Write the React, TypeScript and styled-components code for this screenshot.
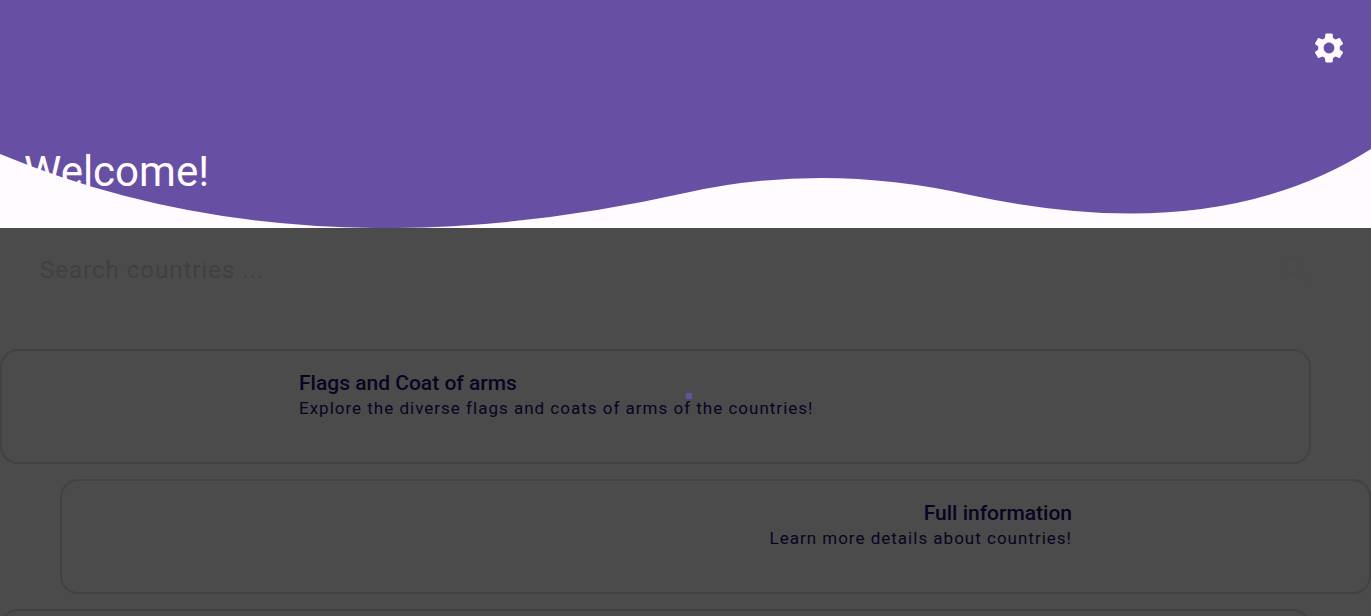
import React from "react";
import styled, { createGlobalStyle } from "styled-components";
import { MdSettings, MdSearch } from "react-icons/md";

const GlobalStyle = createGlobalStyle`
  * { box-sizing: border-box; }
  body {
    margin: 0;
    background: #4b4b4b;
    font-family: Roboto, sans-serif;
  }
`;

const Page = styled.div`
  display: flex;
  flex-direction: column;
  height: 100vh;
  position: relative;
  overflow: hidden;
`;

const Header = styled.header`
  position: relative;
  flex: none;
  height: 228px;
  padding: 24px;
  background: #fffbff;
  display: flex;
  flex-direction: column;
  justify-content: space-between;
`;

const Wave = styled.svg`
  position: absolute;
  inset: 0;
  width: 100%;
  height: 100%;
`;

const SettingsButton = styled.button`
  position: relative;
  align-self: flex-end;
  display: flex;
  justify-content: center;
  width: 36px;
  height: 48px;
  padding: 6px 0;
  border: 0;
  background: none;
  color: #fffbff;
`;

const Title = styled.h1`
  position: relative;
  margin: 0 0 6px;
  font-size: 42px;
  line-height: 52px;
  font-weight: 400;
  color: #fffbff;
`;

const SearchBar = styled.label`
  flex: none;
  display: flex;
  align-items: center;
  height: 84px;
  padding: 0 56px 0 40px;
  color: #4a4a4a;
`;

const SearchInput = styled.input`
  flex: 1;
  min-width: 0;
  padding: 0;
  border: 0;
  outline: 0;
  background: none;
  font: 400 24px/36px Roboto, sans-serif;
  letter-spacing: 1px;
  color: #3d4142;
  &::placeholder { color: #3d4142; opacity: 1; }
`;

const CardList = styled.main`
  flex: 1;
  min-height: 0;
  display: flex;
  flex-direction: column;
  gap: 15px;
  margin-top: 37px;
  overflow: hidden;
`;

const Card = styled.section<{ $end?: boolean }>`
  flex: none;
  width: calc(100% - 60px);
  height: 115px;
  align-self: ${(p) => (p.$end ? "flex-end" : "flex-start")};
  padding: 19px 297px;
  border: 2px solid #424242;
  border-radius: 18px;
  text-align: ${(p) => (p.$end ? "right" : "left")};
  color: #0a0321;
`;

const CardTitle = styled.h2`
  margin: 0;
  font-size: 21px;
  line-height: 26px;
  font-weight: 500;
`;

const CardText = styled.p`
  margin: 0;
  font-size: 17px;
  line-height: 24px;
  letter-spacing: 1px;
`;

const Spinner = styled.div`
  position: absolute;
  top: 393px;
  left: 50%;
  width: 6px;
  height: 6px;
  background: #6750a4;
  transform: rotate(4deg);
`;

export default function App() {
  return (
    <Page>
      <GlobalStyle />
      <Header>
        <Wave viewBox="0 0 1371 228" preserveAspectRatio="none" aria-hidden="true">
          <path
            fill="#6750a4"
            d="M0 0V154Q300 279 685 193Q823 162 970 195Q1215 248 1371 149V0Z"
          />
        </Wave>
        <SettingsButton aria-label="Settings">
          <MdSettings size={36} />
        </SettingsButton>
        <Title>Welcome!</Title>
      </Header>
      <SearchBar>
        <SearchInput type="search" aria-label="Search countries" placeholder="Search countries ..." />
        <MdSearch size={36} aria-hidden="true" />
      </SearchBar>
      <CardList>
        <Card>
          <CardTitle>Flags and Coat of arms</CardTitle>
          <CardText>Explore the diverse flags and coats of arms of the countries!</CardText>
        </Card>
        <Card $end>
          <CardTitle>Full information</CardTitle>
          <CardText>Learn more details about countries!</CardText>
        </Card>
        <Card />
      </CardList>
      <Spinner role="status" aria-label="Loading" />
    </Page>
  );
}
